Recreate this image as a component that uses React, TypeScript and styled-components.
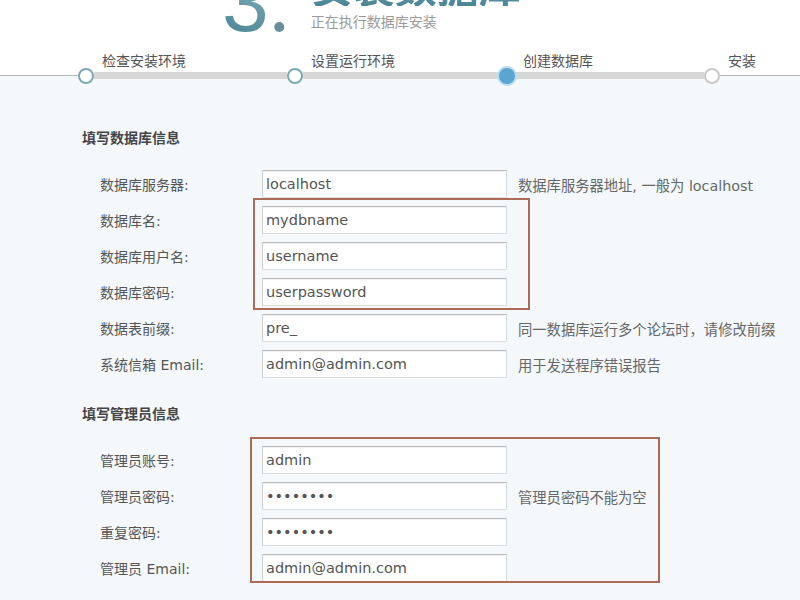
import React, { FC } from 'react';
import styled, { createGlobalStyle } from 'styled-components';

const GlobalStyle = createGlobalStyle`
  html, body {
    margin: 0;
    padding: 0;
    background: #f4f8fb;
    font-family: "DejaVu Sans", "Noto Sans CJK SC", sans-serif;
  }
`;

const Page = styled.div`
  min-height: 600px;
  overflow: hidden;
`;

const Header = styled.header`
  background: #fff;
`;

const TitleBar = styled.div`
  height: 52px;
  display: flex;
  align-items: flex-start;
  padding-left: 222px;
  gap: 21px;
`;

const StepNumber = styled.div`
  margin-top: -40px;
  font-family: "Liberation Sans", sans-serif;
  font-size: 84px;
  line-height: 1;
  white-space: nowrap;
  > .digit {
    background: linear-gradient(200deg, #a9c9d1 0%, #6fa0ae 45%, #3f7b8c 100%);
    -webkit-background-clip: text;
    background-clip: text;
    color: transparent;
  }
  > .dot {
    font-family: "Liberation Serif", serif;
    color: #6b8e9f;
  }
`;

const Titles = styled.div`
  display: flex;
  flex-direction: column;
`;

const MainTitle = styled.h1`
  margin: -36px 0 0;
  font-family: "Noto Sans CJK SC", sans-serif;
  font-size: 42px;
  line-height: 42px;
  font-weight: 700;
  white-space: nowrap;
  background: linear-gradient(180deg, #9cc2cc 0%, #5a93a3 70%, #4b8696 100%);
  -webkit-background-clip: text;
  background-clip: text;
  color: transparent;
`;

const SubTitle = styled.div`
  margin-top: 8px;
  font-family: "Noto Sans CJK SC", sans-serif;
  font-size: 14px;
  line-height: 14px;
  color: #9a9a9a;
  white-space: nowrap;
`;

const Stepper = styled.div`
  display: flex;
  align-items: flex-end;
  background: linear-gradient(180deg, #fff 0, #fff 24px, #f4f8fb 24px);
`;

const thinLine = `linear-gradient(180deg, transparent 9.5px, #b4b4b4 9.5px, #b4b4b4 10.5px, transparent 10.5px)`;

const Lead = styled.div`
  width: 78px;
  height: 20px;
  background: ${thinLine};
`;

const Step = styled.div<{ $width?: number }>`
  display: flex;
  flex-direction: column;
  ${(p) => (p.$width ? `width: ${p.$width}px;` : 'flex: 1;')}
`;

const StepLabel = styled.div`
  padding-left: 24px;
  margin-bottom: -2px;
  font-family: "Noto Sans CJK SC", sans-serif;
  font-size: 14px;
  line-height: 16px;
  color: #555;
  white-space: nowrap;
`;

const Track = styled.div`
  height: 20px;
  display: flex;
  align-items: center;
`;

const Dot = styled.span<{ $state: 'done' | 'current' | 'todo' }>`
  box-sizing: border-box;
  flex: none;
  width: 16px;
  height: 16px;
  border-radius: 50%;
  position: relative;
  z-index: 1;
  background: ${(p) => (p.$state === 'current' ? '#58a6d1' : '#fff')};
  border: 2px solid ${(p) => (p.$state === 'done' ? '#7ea8b6' : p.$state === 'current' ? '#58a6d1' : '#c9c9c9')};
  box-shadow: ${(p) => (p.$state === 'current' ? '0 0 0 2px #b8ddee' : 'none')};
`;

const Bar = styled.span<{ $thin?: boolean }>`
  flex: 1;
  align-self: stretch;
  background: ${(p) =>
    p.$thin
      ? thinLine
      : 'linear-gradient(180deg, transparent 6.5px, #d7d7d7 6.5px, #d7d7d7 13.5px, transparent 13.5px)'};
`;

const Content = styled.main`
  padding: 41px 0 40px 82px;
`;

const SectionTitle = styled.h2<{ $gap?: number }>`
  margin: ${(p) => p.$gap ?? 0}px 0 19px;
  font-family: "Noto Sans CJK SC", sans-serif;
  font-size: 14px;
  line-height: 20px;
  font-weight: 700;
  color: #454545;
`;

const Rows = styled.div`
  position: relative;
  padding-left: 18px;
`;

const Group = styled.div`
  position: relative;
`;

const Mark = styled.div<{ $top: number; $left: number; $width: number; $height: number }>`
  position: absolute;
  box-sizing: border-box;
  top: ${(p) => p.$top}px;
  left: ${(p) => p.$left}px;
  width: ${(p) => p.$width}px;
  height: ${(p) => p.$height}px;
  border: 2px solid #ad6a56;
  pointer-events: none;
`;

const Row = styled.div`
  height: 36px;
  display: flex;
  align-items: center;
`;

const Label = styled.label`
  width: 162px;
  flex: none;
  font-size: 14px;
  color: #555;
  white-space: nowrap;
`;

const Input = styled.input`
  box-sizing: border-box;
  width: 245px;
  height: 28px;
  margin: 0;
  padding: 0 0 0 3px;
  background: #fff;
  border: 1px solid #dedede;
  border-top-color: #bcbcbc;
  border-left-color: #cdcdcd;
  box-shadow: inset 0 1px 1px rgba(0, 0, 0, 0.06);
  font-family: "DejaVu Sans", sans-serif;
  font-size: 14.5px;
  color: #555;
  outline: none;
`;

const Hint = styled.span`
  margin-left: 11px;
  font-size: 14.3px;
  color: #666;
  white-space: nowrap;
`;

type Field = { label: string; value: string; hint?: string; password?: boolean };

const FieldRow: FC<Field> = ({ label, value, hint, password }) => (
  <Row>
    <Label>{label}</Label>
    <Input type={password ? 'password' : 'text'} defaultValue={value} readOnly />
    {hint && <Hint>{hint}</Hint>}
  </Row>
);

const steps: { label: string; state: 'done' | 'current' | 'todo'; width?: number }[] = [
  { label: '检查安装环境', state: 'done', width: 209 },
  { label: '设置运行环境', state: 'done', width: 212 },
  { label: '创建数据库', state: 'current', width: 205 },
  { label: '安装', state: 'todo' }
];

const App: FC = () => (
  <Page>
    <GlobalStyle />
    <Header>
      <TitleBar>
        <StepNumber>
          <span className='digit'>3</span>
          <span className='dot'>.</span>
        </StepNumber>
        <Titles>
          <MainTitle>安装数据库</MainTitle>
          <SubTitle>正在执行数据库安装</SubTitle>
        </Titles>
      </TitleBar>
      <Stepper>
        <Lead />
        {steps.map((s, i) => (
          <Step key={s.label} $width={s.width}>
            <StepLabel>{s.label}</StepLabel>
            <Track>
              <Dot $state={s.state} />
              <Bar $thin={i === steps.length - 1} />
            </Track>
          </Step>
        ))}
      </Stepper>
    </Header>

    <Content>
      <SectionTitle>填写数据库信息</SectionTitle>
      <Rows>
        <FieldRow label='数据库服务器:' value='localhost' hint='数据库服务器地址, 一般为 localhost' />
        <Group>
          <Mark $top={-4} $left={153} $width={277} $height={112} />
          <FieldRow label='数据库名:' value='mydbname' />
          <FieldRow label='数据库用户名:' value='username' />
          <FieldRow label='数据库密码:' value='userpassword' />
        </Group>
        <FieldRow label='数据表前缀:' value='pre_' hint='同一数据库运行多个论坛时，请修改前缀' />
        <FieldRow label='系统信箱 Email:' value='admin@admin.com' hint='用于发送程序错误报告' />
      </Rows>

      <SectionTitle $gap={21}>填写管理员信息</SectionTitle>
      <Rows>
        <Group>
          <Mark $top={-5} $left={150} $width={410} $height={146} />
          <FieldRow label='管理员账号:' value='admin' />
          <FieldRow label='管理员密码:' value='12345678' password hint='管理员密码不能为空' />
          <FieldRow label='重复密码:' value='12345678' password />
          <FieldRow label='管理员 Email:' value='admin@admin.com' />
        </Group>
      </Rows>
    </Content>
  </Page>
);

export default App;
